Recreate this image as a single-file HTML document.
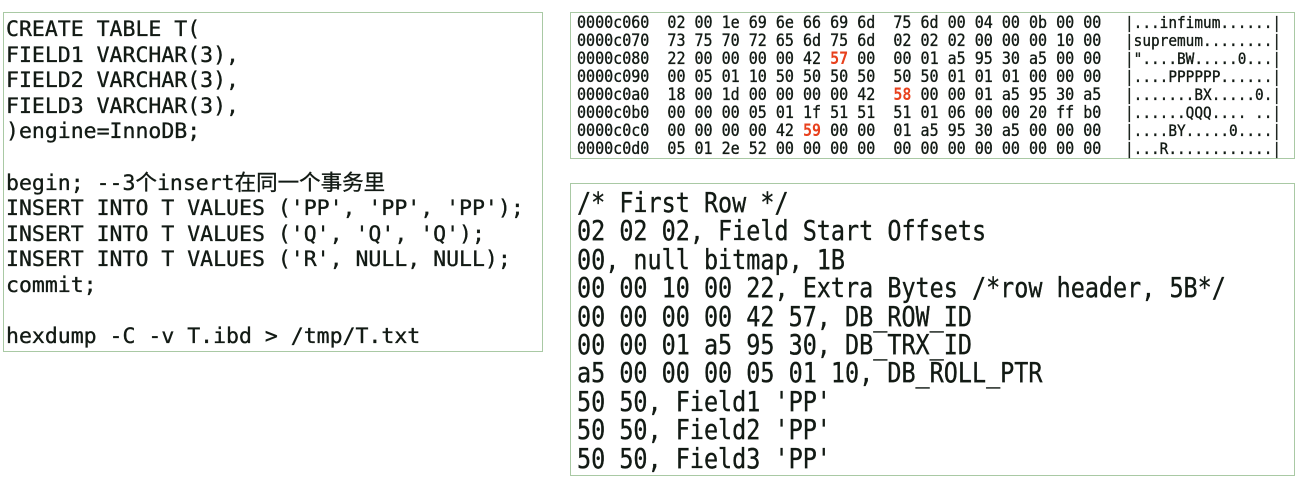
<!DOCTYPE html>
<html><head><meta charset="utf-8"><style>
html,body{margin:0;padding:0;background:#fff;width:1305px;height:477px;overflow:hidden}
.box{position:absolute;border:1px solid #a9c9a4;box-sizing:border-box}
.t{position:absolute;white-space:pre;color:#121a14;font-family:"DejaVu Sans Mono","Liberation Mono","Noto Sans CJK SC",monospace;-webkit-text-stroke:0.35px #121a14}
.r{color:#e8401c;font-weight:bold;-webkit-text-stroke:0}
</style></head><body>
<div class="box" style="left:3px;top:12px;width:540px;height:340px"></div>
<div class="t" style="left:6px;top:17px;font-size:21.5px;line-height:25.6px">CREATE TABLE T(
FIELD1 VARCHAR(3),
FIELD2 VARCHAR(3),
FIELD3 VARCHAR(3),
)engine=InnoDB;

begin; --3个insert在同一个事务里
INSERT INTO T VALUES ('PP', 'PP', 'PP');
INSERT INTO T VALUES ('Q', 'Q', 'Q');
INSERT INTO T VALUES ('R', NULL, NULL);
commit;

hexdump -C -v T.ibd &gt; /tmp/T.txt</div>

<div class="box" style="left:570px;top:12px;width:725px;height:147px"></div>
<div class="t" style="left:577px;top:14px;font-size:16.5px;line-height:18px;transform:scaleX(0.91);transform-origin:0 0">0000c060  02 00 1e 69 6e 66 69 6d  75 6d 00 04 00 0b 00 00
0000c070  73 75 70 72 65 6d 75 6d  02 02 02 00 00 00 10 00
0000c080  22 00 00 00 00 42 <span class="r">57</span> 00  00 01 a5 95 30 a5 00 00
0000c090  00 05 01 10 50 50 50 50  50 50 01 01 01 00 00 00
0000c0a0  18 00 1d 00 00 00 00 42  <span class="r">58</span> 00 00 01 a5 95 30 a5
0000c0b0  00 00 00 05 01 1f 51 51  51 01 06 00 00 20 ff b0
0000c0c0  00 00 00 00 42 <span class="r">59</span> 00 00  01 a5 95 30 a5 00 00 00
0000c0d0  05 01 2e 52 00 00 00 00  00 00 00 00 00 00 00 00</div>
<div class="t" style="left:1125px;top:14px;font-size:16px;line-height:18px;transform:scaleX(0.9);transform-origin:0 0">|...infimum......|
|supremum........|
|"....BW.....0...|
|....PPPPPP......|
|.......BX.....0.|
|......QQQ.... ..|
|....BY.....0....|
|...R............|</div>

<div class="box" style="left:570px;top:183px;width:725px;height:293px"></div>
<div class="t" style="left:577px;top:189px;font-size:27.5px;line-height:28.4px;transform:scaleX(0.852);transform-origin:0 0">/* First Row */
02 02 02, Field Start Offsets
00, null bitmap, 1B
00 00 10 00 22, Extra Bytes /*row header, 5B*/
00 00 00 00 42 57, DB_ROW_ID
00 00 01 a5 95 30, DB_TRX_ID
a5 00 00 00 05 01 10, DB_ROLL_PTR
50 50, Field1 'PP'
50 50, Field2 'PP'
50 50, Field3 'PP'</div>
</body></html>
